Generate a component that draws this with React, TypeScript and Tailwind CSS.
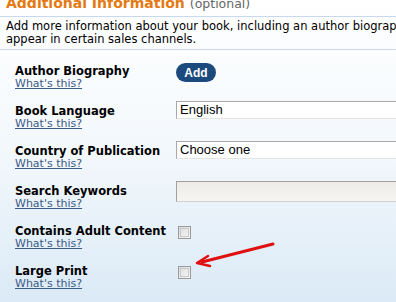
import React from "react";

const rows = [
  { label: "Author Biography", kind: "add" },
  { label: "Book Language", kind: "input", value: "English" },
  { label: "Country of Publication", kind: "input", value: "Choose one" },
  { label: "Search Keywords", kind: "search" },
  { label: "Contains Adult Content", kind: "check" },
  { label: "Large Print", kind: "check" },
];

function Control({ row }: { row: any }) {
  if (row.kind === "add")
    return (
      <div className="mt-[-2px] h-[19px] w-[40px] rounded-full bg-[#1d4a7d] text-white text-[12px] font-bold flex items-center justify-center [font-family:'Liberation_Sans',Arial,sans-serif]">
        Add
      </div>
    );
  if (row.kind === "input")
    return (
      <div className="mt-[-4px] h-[18px] w-[240px] border border-[#a9a9a9] border-b-[#e3e3e3] border-r-[#e3e3e3] bg-white pl-[3px] text-[13px] leading-[16px] text-black [font-family:'Liberation_Sans',Arial,sans-serif]">
        {row.value}
      </div>
    );
  if (row.kind === "search")
    return (
      <div className="mt-[-4px] h-[21px] w-[240px] border border-[#a0a0a0] border-b-[#d0d0d0] bg-gradient-to-b from-[#ecebe8] to-[#f6f5f2]" />
    );
  return (
    <div className="ml-[2px] mt-[1px] h-[13px] w-[13px] border border-[#9a9a9a] bg-gradient-to-br from-[#dcdcdc] to-[#f8f8f8] p-px">
      <div className="h-full w-full border border-[#c9c9c9]" />
    </div>
  );
}

export default function App() {
  return (
    <div className="relative h-[302px] w-[396px] overflow-hidden bg-gradient-to-b from-white via-[#f3f8fc] to-[#dbeaf6] [font-family:'DejaVu_Sans',Verdana,sans-serif]">
      <div className="mt-[-5px] h-[16px] flex items-baseline pl-[6px] whitespace-nowrap leading-[16px]">
        <span className="text-[14px] font-bold text-[#e47911]">Additional Information</span>
        <span className="ml-[5px] text-[12.5px] text-[#666]">(optional)</span>
      </div>
      <div className="mt-[5px] h-px bg-[#c8d8ee]" />
      <div className="pl-[6px] pt-[3px] pb-[3px] text-[11.5px] leading-[13px] text-black whitespace-nowrap">
        <div>Add more information about your book, including an author biography</div>
        <div>appear in certain sales channels.</div>
      </div>
      <div className="h-px bg-[#c8d8ee]" />
      <div className="pt-[15px] pl-[15px] flex flex-col gap-[15px]">
        {rows.map((r) => (
          <div key={r.label} className="flex">
            <div className="w-[161px] shrink-0">
              <div className="text-[11.5px] font-bold leading-[13px] text-black whitespace-nowrap">{r.label}</div>
              <div className="text-[11px] leading-[12px] text-[#3b5c86] underline whitespace-nowrap">What's this?</div>
            </div>
            <div>
              <Control row={r} />
            </div>
          </div>
        ))}
      </div>
      <svg className="absolute left-0 top-0" width="396" height="302">
        <line x1="273" y1="244" x2="202" y2="262" stroke="#e01010" strokeWidth="3" strokeLinecap="round" />
        <path d="M208 256 L197 263 L210 266" fill="none" stroke="#e01010" strokeWidth="2.5" strokeLinecap="round" strokeLinejoin="round" />
      </svg>
    </div>
  );
}
